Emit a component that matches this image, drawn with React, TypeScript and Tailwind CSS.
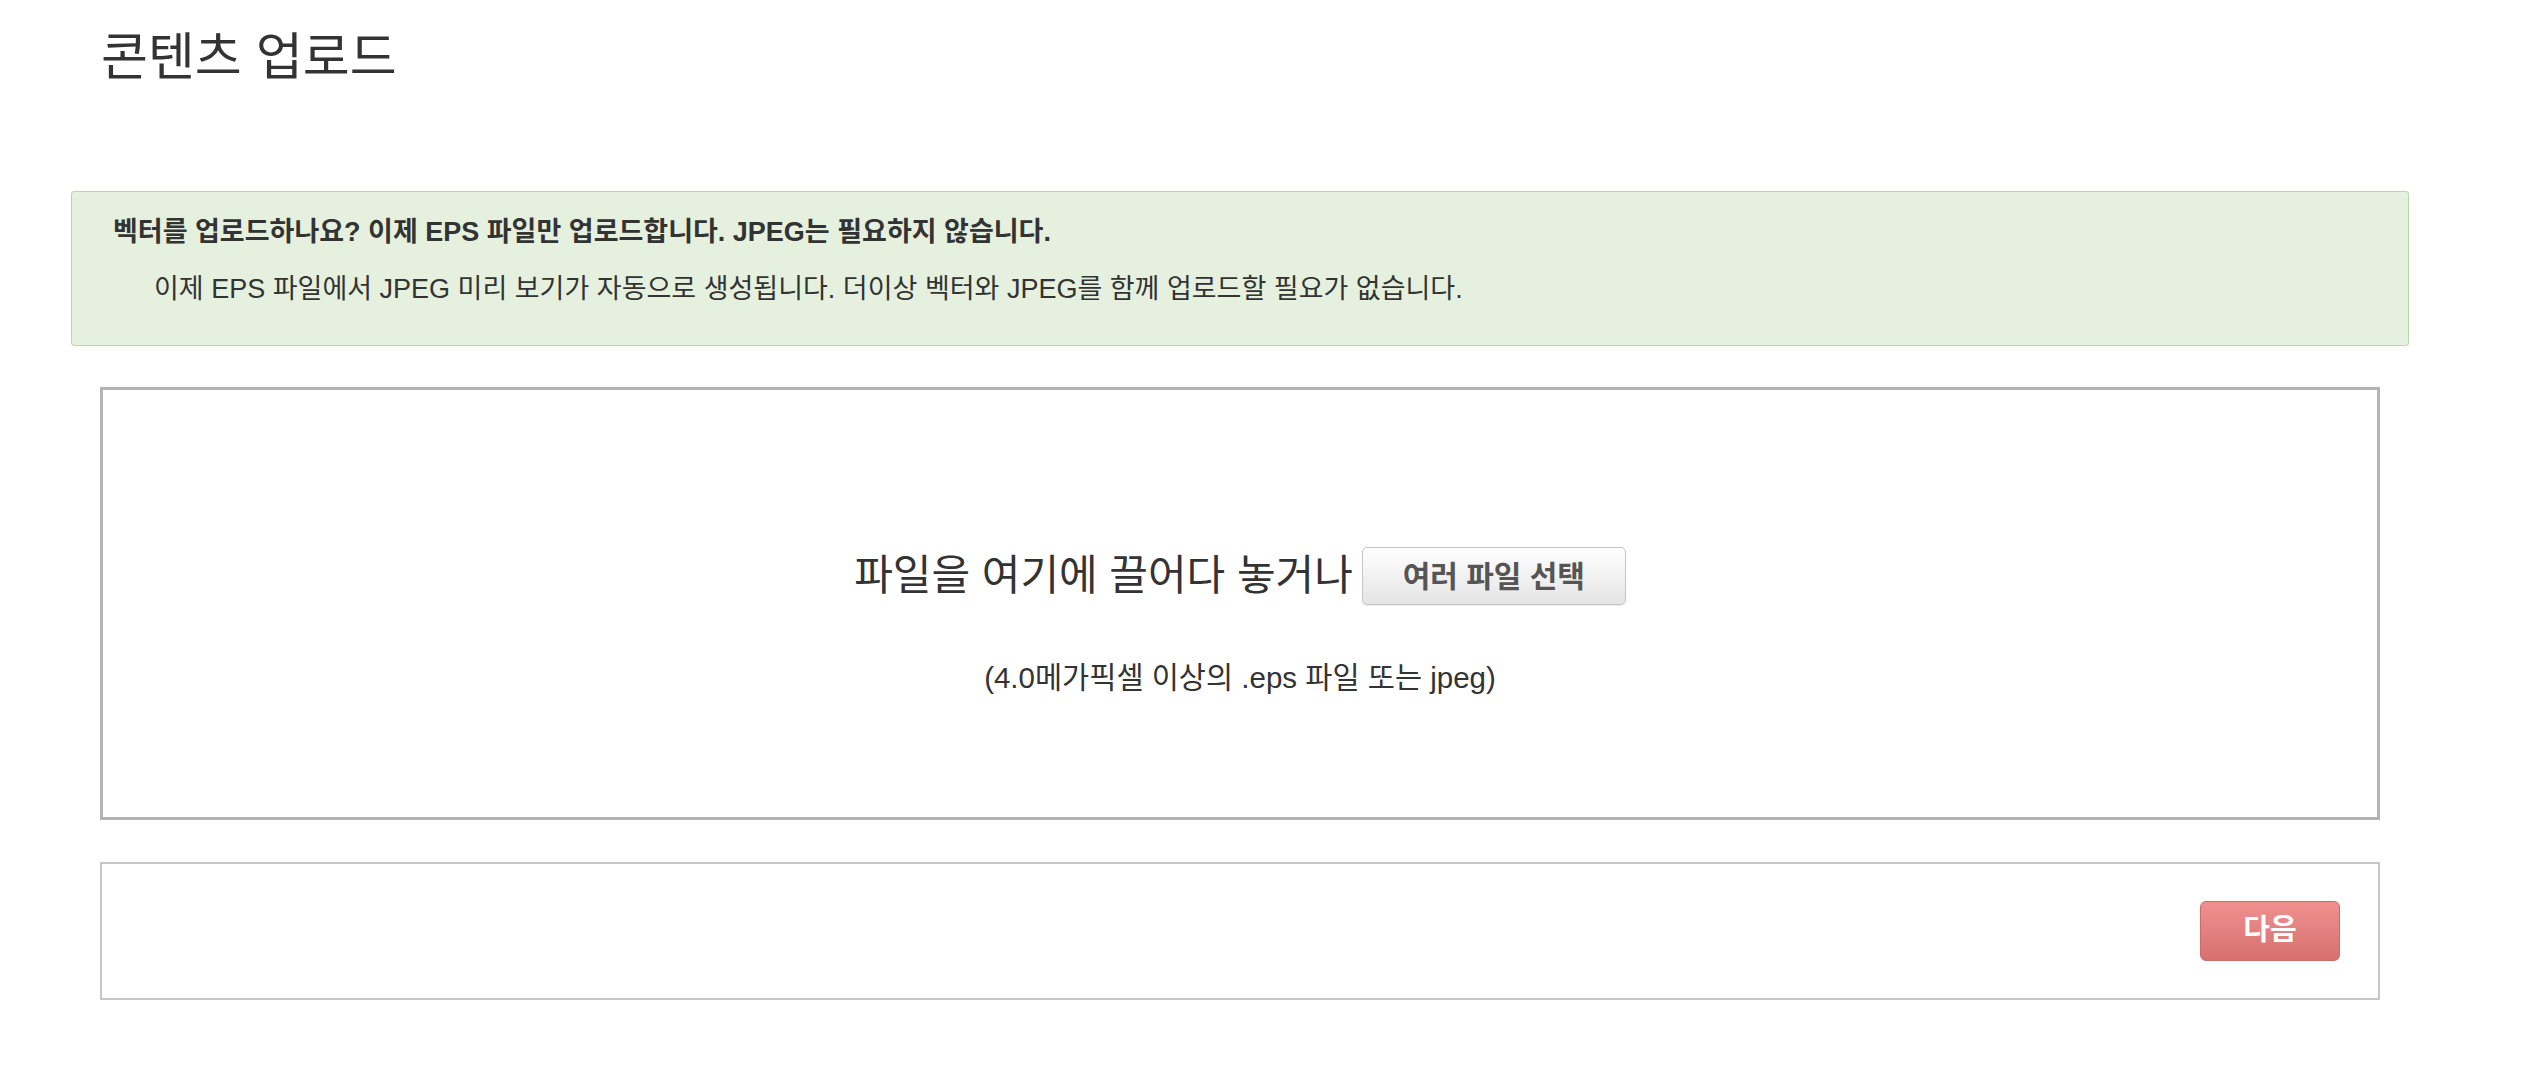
export default function App() {
  return (
    <div className="min-h-screen bg-white font-['Liberation_Sans','Noto_Sans_CJK_KR',sans-serif] text-[#333]">
      <div className="pl-[71px] pr-[112px] pt-[32px]">
        {/* Page title */}
        <h1 className="ml-[30px] text-[51px] leading-none font-normal text-[#333]">콘텐츠 업로드</h1>

        {/* Info notice */}
        <div className="mt-[108px] rounded-[3px] border border-[#bcd6a9] bg-[#e5f1de] pl-[41px] pr-6 pt-[25px] pb-[41px]">
          <p className="text-[27px] leading-[30px] font-bold text-[#333]">
            벡터를 업로드하나요? 이제 EPS 파일만 업로드합니다. JPEG는 필요하지 않습니다.
          </p>
          <p className="mt-[27px] pl-[41px] text-[27px] leading-[30px] text-[#333]">
            이제 EPS 파일에서 JPEG 미리 보기가 자동으로 생성됩니다. 더이상 벡터와 JPEG를 함께 업로드할 필요가 없습니다.
          </p>
        </div>

        <div className="mx-[29px]">
          {/* Drop zone */}
          <div className="mt-[41px] flex h-[433px] flex-col items-center border-[3px] border-[#b3b3b3] bg-white pt-[157px]">
            <div className="flex items-center gap-[9px]">
              <span className="text-[42px] leading-none text-[#333]">파일을 여기에 끌어다 놓거나</span>
              <button
                type="button"
                className="h-[58px] w-[264px] rounded-[5px] border border-[#c6c6c6] bg-gradient-to-b from-white to-[#e4e4e4] text-[30px] font-bold text-[#555] shadow-[0_1px_1px_rgba(0,0,0,0.08)]"
              >
                여러 파일 선택
              </button>
            </div>
            <p className="mt-[58px] text-[29.5px] leading-[30px] text-[#333]">
              (4.0메가픽셀 이상의 .eps 파일 또는 jpeg)
            </p>
          </div>

          {/* Footer actions */}
          <div className="mt-[42px] flex h-[138px] items-center justify-end border-2 border-[#c6c6c6] bg-white pr-[38px]">
            <button
              type="button"
              className="h-[60px] w-[140px] rounded-[6px] border border-[#c96c6a] bg-gradient-to-b from-[#ef9190] to-[#d6706e] text-[29px] font-bold text-white"
            >
              다음
            </button>
          </div>
        </div>
      </div>
    </div>
  );
}
